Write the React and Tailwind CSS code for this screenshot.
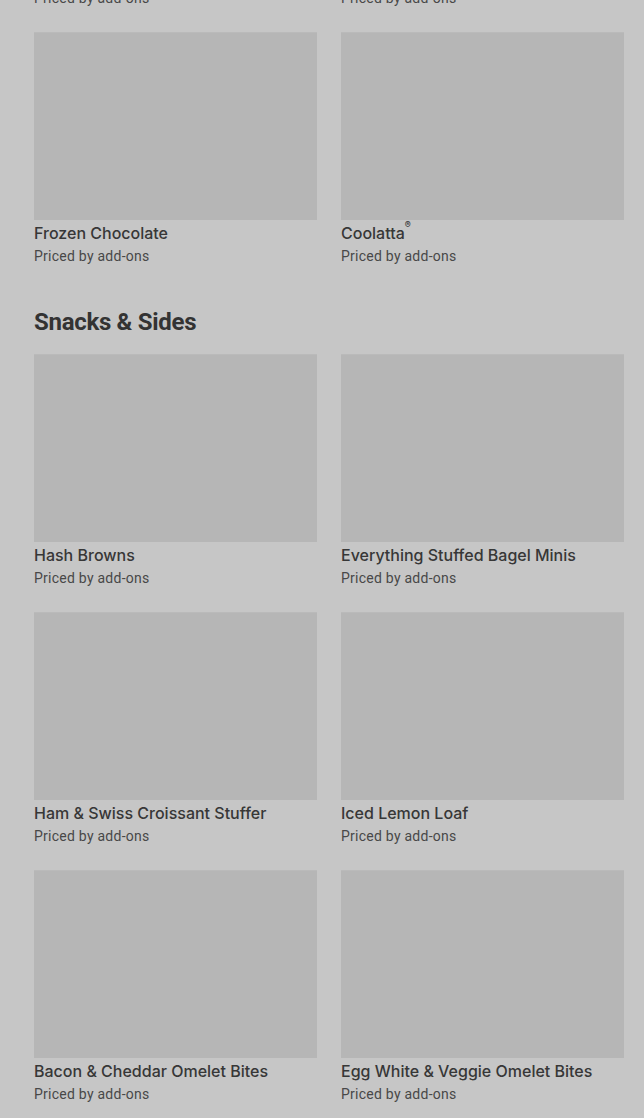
const items = {
  prev: ["Frozen Coffee", "Iced Latte"],
  drinks: ["Frozen Chocolate", "Coolatta®"],
  snacks: [
    "Hash Browns",
    "Everything Stuffed Bagel Minis",
    "Ham & Swiss Croissant Stuffer",
    "Iced Lemon Loaf",
    "Bacon & Cheddar Omelet Bites",
    "Egg White & Veggie Omelet Bites",
  ],
};

const Card = ({ name }) => {
  const i = name.indexOf("®");
  return (
    <div className="flex flex-col">
      <div className="h-[188px] bg-[#b6b6b6] border-t border-[#bababa]" />
      <div className="mt-[2px] text-[16px] leading-[22px] font-medium text-[#373737] font-['Inter',sans-serif]">
        {i >= 0 ? (
          <>
            {name.slice(0, i)}
            <sup className="text-[9px] align-top relative top-[3px]">®</sup>
          </>
        ) : (
          name
        )}
      </div>
      <div className="mt-[2px] text-[14px] leading-[20px] text-[#484848] tracking-[0.25px]">
        Priced by add-ons
      </div>
    </div>
  );
};

const Grid = ({ list }) => (
  <div className="grid grid-cols-2 gap-x-6 gap-y-6">
    {list.map((n) => (
      <Card key={n} name={n} />
    ))}
  </div>
);

export default function App() {
  return (
    <div
      className="min-h-screen bg-[#c6c6c6] overflow-hidden"
      style={{ fontFamily: "Roboto, 'Liberation Sans', sans-serif" }}
    >
      <div className="mt-[-226px] pl-[34px] pr-[20px]">
        <Grid list={[...items.prev, ...items.drinks]} />
        <h2 className="mt-[40px] mb-[16px] text-[24px] leading-8 font-bold text-[#333] tracking-[-0.3px]">
          Snacks &amp; Sides
        </h2>
        <Grid list={items.snacks} />
        <div className="h-10" />
      </div>
    </div>
  );
}
